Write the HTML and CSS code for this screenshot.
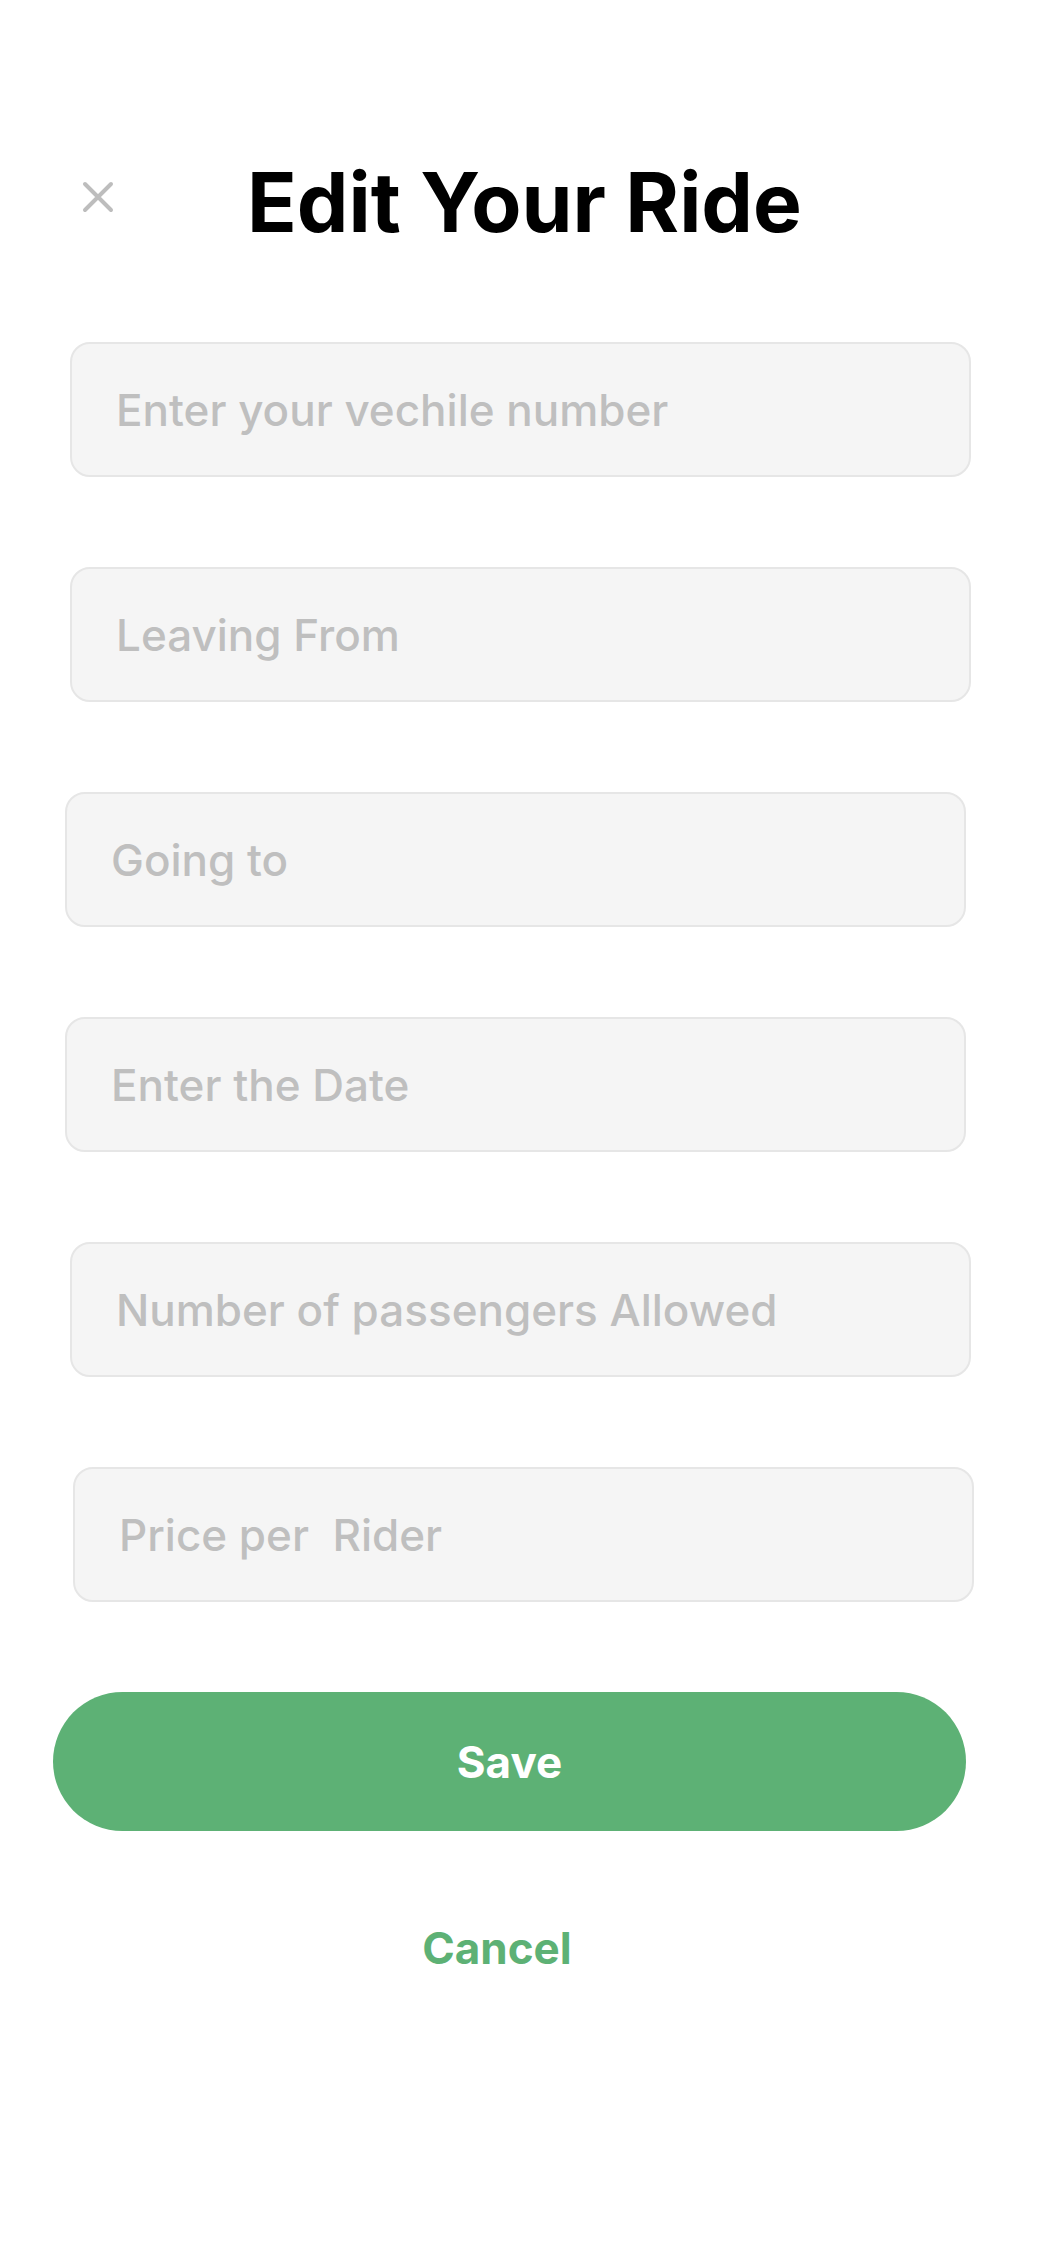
FILE: index.html
```html
<!DOCTYPE html>
<html lang="en">
<head>
<meta charset="utf-8">
<title>Edit Your Ride</title>
<link rel="stylesheet" href="styles.css">
</head>
<body>
<main class="screen">
  <header class="header">
    <button class="close" aria-label="Close">
      <svg width="32" height="32" viewBox="0 0 32 32" aria-hidden="true">
        <path d="M3 3 L29 29 M29 3 L3 29" stroke="#bdbdbd" stroke-width="4" stroke-linecap="round" fill="none"/>
      </svg>
    </button>
    <h1 class="title">Edit Your Ride</h1>
  </header>
  <form class="form">
    <div class="field field-a">Enter your vechile number</div>
    <div class="field field-a">Leaving From</div>
    <div class="field field-b">Going to</div>
    <div class="field field-b">Enter the Date</div>
    <div class="field field-a">Number of passengers Allowed</div>
    <div class="field field-c">Price per&nbsp; Rider</div>
    <div class="btn-save">Save</div>
  </form>
  <div class="cancel">Cancel</div>
</main>
</body>
</html>
```

FILE: styles.css
```css
* { box-sizing: border-box; }
html, body { margin: 0; padding: 0; background: #ffffff; }
body { font-family: Inter, "Noto Sans", "Liberation Sans", sans-serif; width: 1042px; min-height: 2256px; }
.screen { padding-top: 162px; }
.header { display: flex; align-items: flex-start; padding-left: 82px; height: 82px; }
.close { border: 0; background: none; padding: 0; margin-top: 19px; width: 32px; height: 32px; display: block; }
.close svg { display: block; }
.title { margin: 0 0 0 133px; font-size: 82px; line-height: 1; font-weight: 700; color: #000; letter-spacing: 0; white-space: nowrap; }
.form { display: flex; flex-direction: column; gap: 90px; margin-top: 98px; }
.field { width: 901px; height: 135px; background: #f5f5f5; border: 2px solid #e6e6e6; border-radius: 20px; padding-left: 44px; display: flex; align-items: center; font-size: 44px; color: #bfbfbf; font-weight: 500; }
.field-a { margin-left: 70px; }
.field-b { margin-left: 65px; }
.field-c { margin-left: 73px; }
.btn-save { margin-left: 53px; width: 913px; height: 139px; border-radius: 70px; background: #5db175; color: #ffffff; font-size: 44px; font-weight: 700; display: flex; align-items: center; justify-content: center; }
.cancel { margin-top: 95px; width: 994px; text-align: center; font-size: 44px; line-height: 1; font-weight: 700; color: #5db175; }
```
